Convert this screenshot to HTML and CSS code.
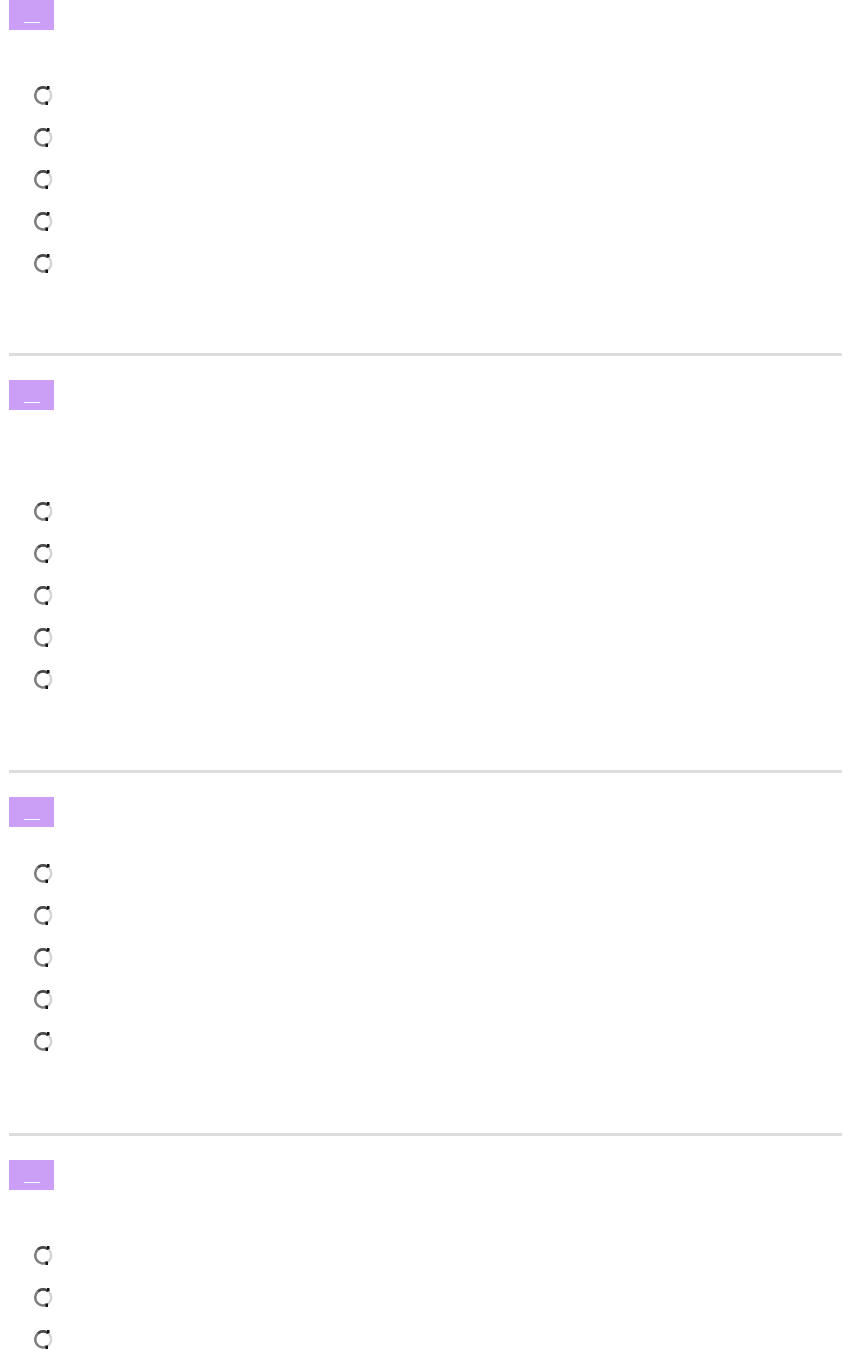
FILE: index.html
```html
<!DOCTYPE html>
<html lang="en">
<head>
    <meta charset="UTF-8">
    <meta name="viewport" content="width=device-width, initial-scale=1.0">
    <title>Quiz</title>
    <link rel="stylesheet" href="styles.css">
</head>
<body>
    <main class="quiz">
        <section class="question">
            <div class="tag"><span class="tag-line"></span></div>
            <div class="question-text"></div>
            <ul class="options">
                <li><span class="radio"></span></li>
                <li><span class="radio"></span></li>
                <li><span class="radio"></span></li>
                <li><span class="radio"></span></li>
                <li><span class="radio"></span></li>
            </ul>
        </section>

        <section class="question">
            <div class="tag"><span class="tag-line"></span></div>
            <div class="question-text tall"></div>
            <ul class="options">
                <li><span class="radio"></span></li>
                <li><span class="radio"></span></li>
                <li><span class="radio"></span></li>
                <li><span class="radio"></span></li>
                <li><span class="radio"></span></li>
            </ul>
        </section>

        <section class="question">
            <div class="tag"><span class="tag-line"></span></div>
            <div class="question-text short"></div>
            <ul class="options">
                <li><span class="radio"></span></li>
                <li><span class="radio"></span></li>
                <li><span class="radio"></span></li>
                <li><span class="radio"></span></li>
                <li><span class="radio"></span></li>
            </ul>
        </section>

        <section class="question last">
            <div class="tag"><span class="tag-line"></span></div>
            <div class="question-text"></div>
            <ul class="options">
                <li><span class="radio"></span></li>
                <li><span class="radio"></span></li>
                <li><span class="radio"></span></li>
                <li><span class="radio"></span></li>
                <li><span class="radio"></span></li>
            </ul>
        </section>
    </main>

    <script>
        let radioSvg = '<svg width="20" height="20" viewBox="0 0 20 20">' +
            '<circle cx="10" cy="10.5" r="7.5" fill="#fff"/>' +
            '<path d="M15 4 A8 8 0 1 0 14 17.5" fill="none" stroke="#7e7e7e" stroke-width="2.6"/>' +
            '<path d="M5 4.2 A8 8 0 0 1 15 4" fill="none" stroke="#4a4a4a" stroke-width="2.6"/>' +
            '<path d="M16 5 A8 8 0 0 1 14 17.5" fill="none" stroke="#d4d4d4" stroke-width="2.2"/>' +
            '<rect x="14" y="1" width="2.5" height="3.5" fill="#111"/>' +
            '<rect x="12.5" y="16.5" width="2.5" height="3.5" fill="#111"/>' +
            '</svg>';

        let radios = document.getElementsByClassName("radio");
        for (let i = 0; i < radios.length; i++) {
            radios[i].innerHTML = radioSvg;
        }
    </script>
</body>
</html>
```

FILE: styles.css
```css
body {
    font-family: "Liberation Sans", Arial, sans-serif;
    background-color: #fff;
    margin: 0;
    padding: 0;
}

.quiz {
    padding: 0 9px;
}

.question {
    padding-bottom: 70px;
    border-bottom: 3px solid #dddddd;
    margin-bottom: 24px;
}

.question:first-child {
    padding-bottom: 69px;
}

.question:nth-child(3) {
    padding-bottom: 71px;
}

.question.last {
    border-bottom: none;
    margin-bottom: 0;
}

.tag {
    width: 45px;
    height: 30px;
    background-color: #cc9ff6;
    display: flex;
    align-items: flex-end;
    justify-content: center;
    padding-bottom: 7px;
    box-sizing: border-box;
}

.tag-line {
    display: block;
    width: 16px;
    height: 1px;
    background-color: #fff;
}

.question-text {
    height: 44px;
}

.question-text.tall {
    height: 80px;
}

.question-text.short {
    height: 25px;
}

.options {
    list-style: none;
    margin: 0;
    padding: 0 0 0 24px;
}

.options li {
    height: 42px;
    display: flex;
    align-items: center;
}

.radio {
    display: block;
    width: 20px;
    height: 20px;
}

.radio svg {
    display: block;
}
```
